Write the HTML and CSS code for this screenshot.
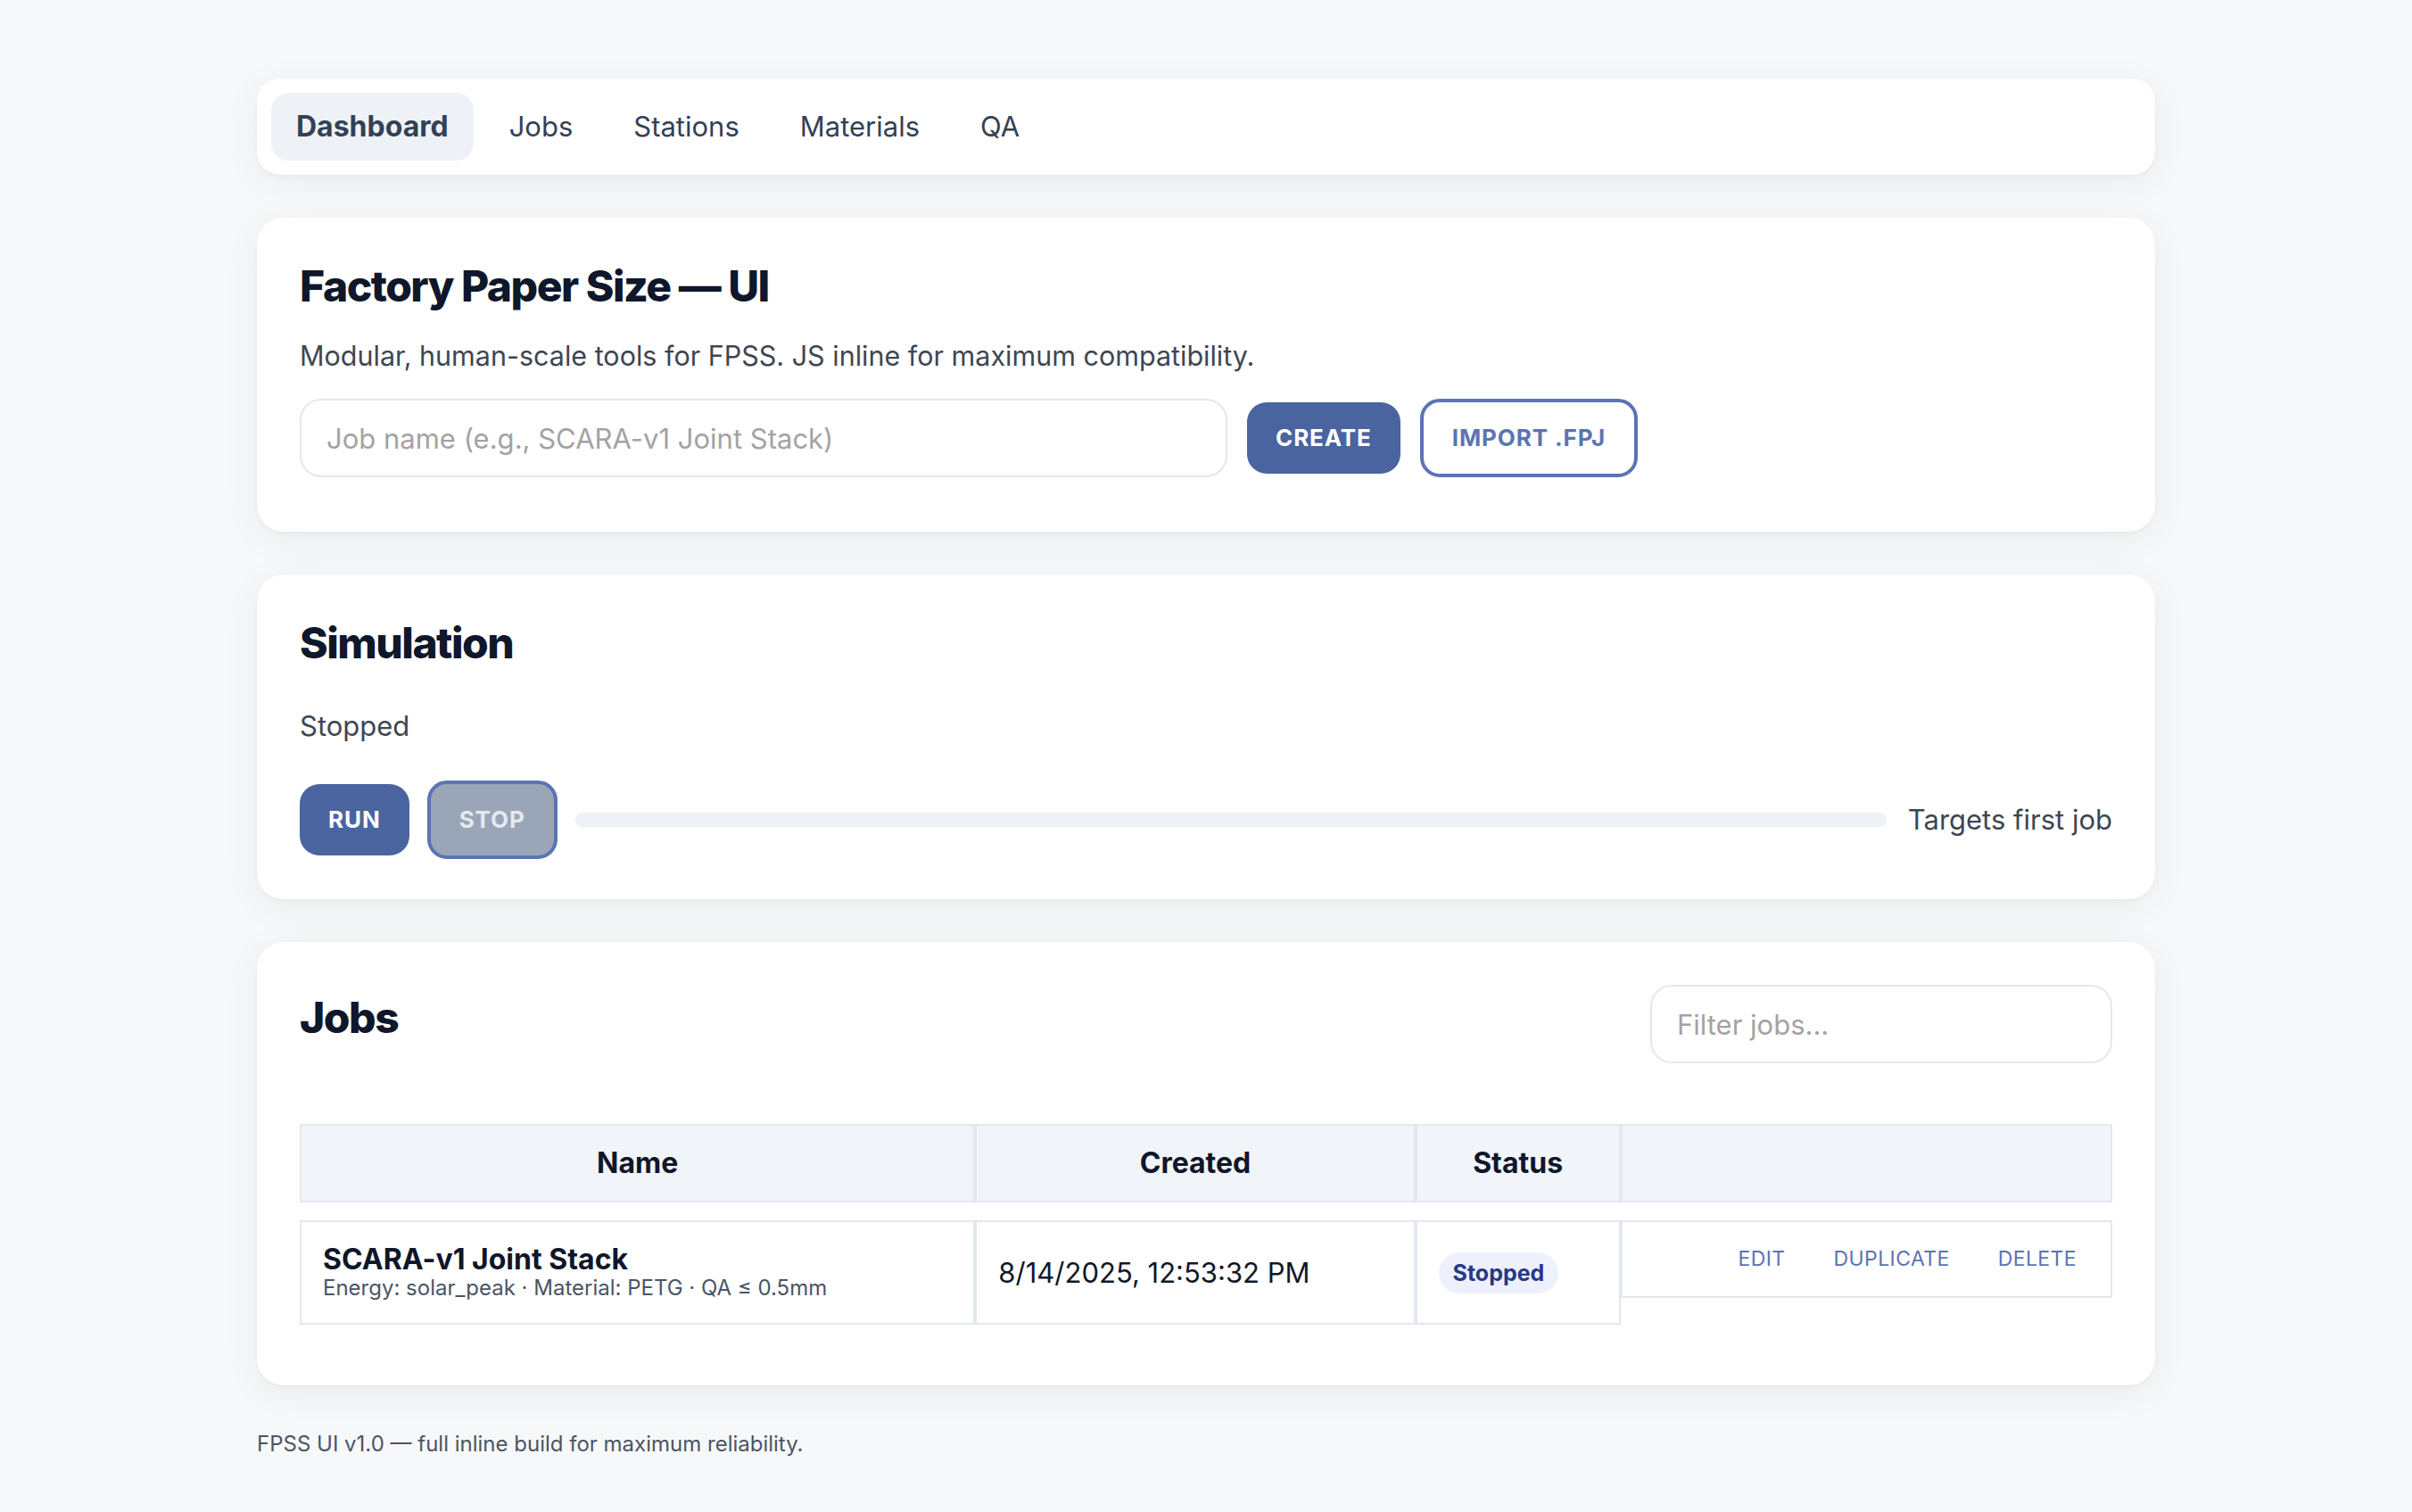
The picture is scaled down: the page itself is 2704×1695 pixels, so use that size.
FILE: index.html
```html
<!DOCTYPE html>
<html lang="en">
<head>
<meta charset="utf-8">
<title>Factory Paper Size — UI</title>
<link rel="stylesheet" href="styles.css">
</head>
<body>
<div class="wrap">
  <nav class="nav">
    <a class="nav-item active" href="#">Dashboard</a>
    <a class="nav-item" href="#">Jobs</a>
    <a class="nav-item" href="#">Stations</a>
    <a class="nav-item" href="#">Materials</a>
    <a class="nav-item" href="#">QA</a>
  </nav>

  <section class="card hero">
    <h1 class="title">Factory Paper Size — UI</h1>
    <p class="lead">Modular, human-scale tools for FPSS. JS inline for maximum compatibility.</p>
    <div class="create-row">
      <input class="text-input job-input" type="text" placeholder="Job name (e.g., SCARA-v1 Joint Stack)">
      <button class="btn btn-primary">Create</button>
      <button class="btn btn-outline">Import .FPJ</button>
    </div>
  </section>

  <section class="card sim">
    <h2 class="title">Simulation</h2>
    <div class="sim-status">Stopped</div>
    <div class="sim-row">
      <button class="btn btn-primary">Run</button>
      <button class="btn btn-outline btn-disabled" disabled>Stop</button>
      <div class="progress"><div class="progress-fill"></div></div>
      <span class="sim-note">Targets first job</span>
    </div>
  </section>

  <section class="card jobs">
    <div class="jobs-head">
      <h2 class="title jobs-title">Jobs</h2>
      <input class="text-input filter-input" type="text" placeholder="Filter jobs...">
    </div>
    <table class="jobs-table">
      <thead>
        <tr>
          <th class="col-name">Name</th>
          <th class="col-created">Created</th>
          <th class="col-status">Status</th>
          <th class="col-actions"></th>
        </tr>
      </thead>
      <tbody>
        <tr>
          <td>
            <div class="job-name">SCARA-v1 Joint Stack</div>
            <div class="job-meta">Energy: solar_peak · Material: PETG · QA ≤ 0.5mm</div>
          </td>
          <td class="job-date">8/14/2025, 12:53:32 PM</td>
          <td><span class="badge">Stopped</span></td>
          <td class="actions-cell">
            <div class="actions">
              <button class="link-btn">Edit</button>
              <button class="link-btn">Duplicate</button>
              <button class="link-btn">Delete</button>
            </div>
          </td>
        </tr>
      </tbody>
    </table>
  </section>

  <footer class="footer">FPSS UI v1.0 — full inline build for maximum reliability.</footer>
</div>
</body>
</html>
```

FILE: styles.css
```css
* { box-sizing: border-box; }

html, body {
  margin: 0;
  padding: 0;
}

body {
  background: #f7f8fa;
  font-family: Inter, "Noto Sans", "Liberation Sans", sans-serif;
  color: #111827;
}

.wrap {
  width: 2128px;
  margin: 0 auto;
  padding: 88px 0 60px;
  display: flex;
  flex-direction: column;
  gap: 48px;
}

/* NAV */
.nav {
  background: #fff;
  border-radius: 26px;
  padding: 16px;
  display: flex;
  gap: 12px;
  box-shadow: 0 8px 40px rgba(15, 23, 42, 0.06), 0 2px 4px rgba(15, 23, 42, 0.03);
}

.nav-item {
  display: block;
  padding: 14px 28px;
  font-size: 31px;
  line-height: 48px;
  color: #334155;
  text-decoration: none;
  border-radius: 20px;
  font-weight: 400;
}

.nav-item.active {
  background: #eef2f7;
  font-size: 32px;
  font-weight: 700;
}

/* CARDS */
.card {
  background: #fff;
  border-radius: 30px;
  padding: 48px;
  box-shadow: 0 8px 40px rgba(15, 23, 42, 0.06), 0 2px 4px rgba(15, 23, 42, 0.03);
}

.title {
  margin: 0;
  font-size: 48px;
  line-height: 58px;
  font-weight: 800;
  color: #0f172a;
  letter-spacing: -1.5px;
}

.hero .title { margin-bottom: 30px; }

.lead {
  margin: 0 0 29px;
  font-size: 30.5px;
  line-height: 38px;
  color: #3f4652;
}

.create-row {
  display: flex;
  align-items: center;
  gap: 22px;
  margin-bottom: 13px;
}

.text-input {
  height: 88px;
  border: 2px solid #e2e8f0;
  border-radius: 24px;
  padding: 0 28px;
  font-family: inherit;
  font-size: 31px;
  color: #111827;
  background: #fff;
  outline: none;
}

.text-input::placeholder { color: #a3a3a3; }

.job-input { width: 1040px; }

.btn {
  font-family: inherit;
  font-size: 26px;
  line-height: 32px;
  font-weight: 700;
  letter-spacing: 0.9px;
  text-transform: uppercase;
  padding: 24px 32px;
  border-radius: 22px;
  border: none;
  cursor: pointer;
}

.btn-primary {
  background: #4a64a0;
  color: #fff;
}

.btn-outline {
  background: #fff;
  color: #5b74b2;
  border: 4px solid #5b74b2;
}

.btn-disabled {
  background: #9aa5b8;
  color: #e5e9f0;
}

/* SIMULATION */
.sim { padding-bottom: 45px; }

.sim .title { margin-bottom: 45px; }

.sim-status {
  font-size: 31px;
  line-height: 38px;
  color: #3f4652;
  margin-bottom: 42px;
}

.sim-row {
  display: flex;
  align-items: center;
  gap: 20px;
}

.progress {
  flex: 1;
  height: 16px;
  border-radius: 8px;
  background: #eef1f6;
  overflow: hidden;
}

.progress-fill {
  width: 0;
  height: 100%;
  background: #4a64a0;
}

.sim-note {
  margin-left: 4px;
  font-size: 31px;
  line-height: 38px;
  color: #3f4652;
}

/* JOBS */
.jobs-head {
  display: flex;
  justify-content: space-between;
  align-items: flex-start;
}

.jobs-title { margin-top: 8px; }

.filter-input { width: 518px; }

.jobs-table {
  width: 100%;
  margin-top: 48px;
  border-collapse: separate;
  border-spacing: 0 20px;
}

.jobs-table th {
  background: #f1f4f9;
  border: 2px solid #e2e8f0;
  padding: 24px;
  font-size: 32px;
  line-height: 36px;
  font-weight: 700;
  color: #0f172a;
  text-align: center;
}

.col-name { width: 757px; }
.col-created { width: 493px; }
.col-status { width: 230px; }
.col-actions { width: 551px; }

.jobs-table td {
  border: 2px solid #e2e8f0;
  padding: 24px;
  vertical-align: middle;
  text-align: left;
}

.job-name {
  font-size: 32px;
  line-height: 34px;
  font-weight: 700;
  color: #0f172a;
  padding-top: 1px;
}

.job-meta {
  font-size: 24px;
  line-height: 30px;
  color: #4b5563;
}

.job-date {
  font-size: 31px;
  line-height: 38px;
  color: #111827;
}

.badge {
  display: inline-block;
  padding: 7px 16px;
  border-radius: 999px;
  background: #eef1fd;
  color: #26398a;
  font-size: 25px;
  line-height: 32px;
  font-weight: 700;
}

.jobs-table td.actions-cell {
  border: none;
  padding: 0;
  vertical-align: top;
}

.actions {
  display: flex;
  justify-content: flex-end;
  gap: 26px;
  border: 2px solid #e2e8f0;
  padding: 24px;
}

.link-btn {
  background: none;
  border: none;
  padding: 0 14px;
  font-family: inherit;
  font-size: 23px;
  line-height: 35px;
  letter-spacing: 0.4px;
  text-transform: uppercase;
  color: #5b74b2;
  cursor: pointer;
}

/* FOOTER */
.footer {
  font-size: 24px;
  line-height: 36px;
  color: #4b5563;
}
```
